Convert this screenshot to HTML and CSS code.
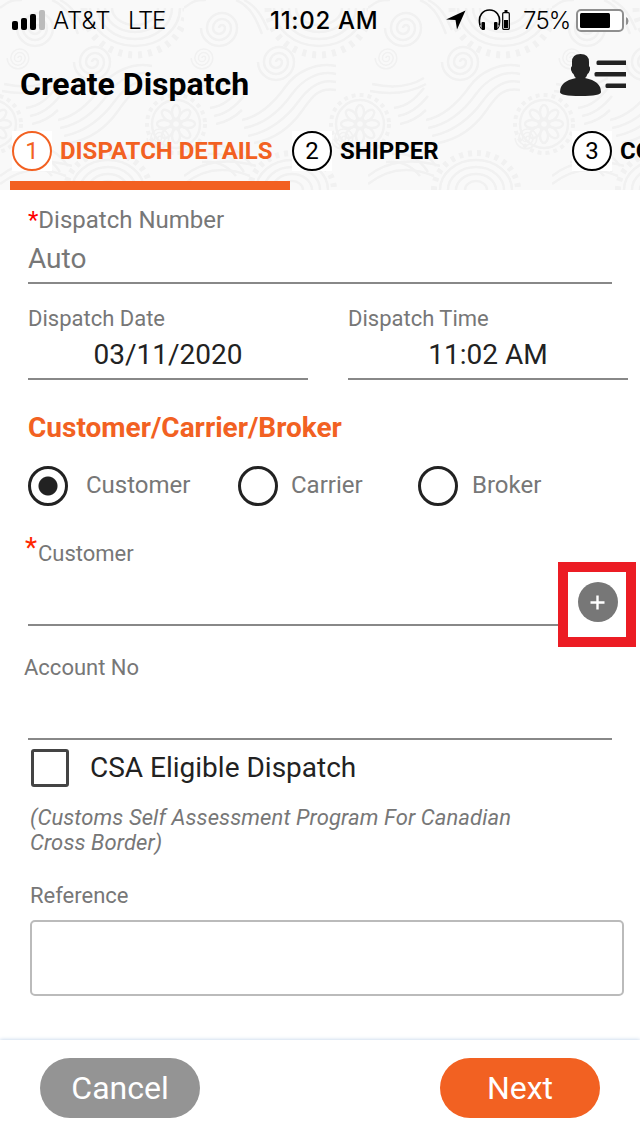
FILE: index.html
```html
<!DOCTYPE html>
<html lang="en">
	<head>
		<meta charset="UTF-8">
		<title>Create Dispatch</title>
		<link rel="stylesheet" href="styles.css">
	</head>
	<body>

		<header>
			<svg class="paisley" width="640" height="190">
				<defs>
					<path id="spiral" d="M0 0a3 3 0 0 1 6 0a6 6 0 0 1-12 0a9 9 0 0 1 18 0a12 12 0 0 1-24 0a15 15 0 0 1 30 0a18 18 0 0 1-36 0"/>
					<g id="flower">
						<circle r="4"/>
						<ellipse cx="0" cy="-12" rx="4" ry="7"/>
						<ellipse cx="0" cy="12" rx="4" ry="7"/>
						<ellipse cx="12" cy="0" rx="7" ry="4"/>
						<ellipse cx="-12" cy="0" rx="7" ry="4"/>
						<ellipse cx="0" cy="-12" rx="4" ry="7" transform="rotate(45)"/>
						<ellipse cx="0" cy="12" rx="4" ry="7" transform="rotate(45)"/>
						<ellipse cx="12" cy="0" rx="7" ry="4" transform="rotate(45)"/>
						<ellipse cx="-12" cy="0" rx="7" ry="4" transform="rotate(45)"/>
						<circle r="24"/>
						<circle r="29" stroke-width="4" stroke-dasharray="4 4"/>
					</g>
					<pattern id="paisley" width="184" height="190" patternUnits="userSpaceOnUse">
						<g fill="none" stroke="#f1f1f1" stroke-width="2.500">
							<use href="#spiral" x="92" y="62"/>
							<use href="#spiral" x="35" y="28"/>
							<use href="#spiral" transform="translate(18 58) scale(.6)"/>
							<use href="#spiral" transform="translate(158 138) scale(.6)"/>
							<use href="#flower" x="176" y="124"/>
							<use href="#flower" x="-8" y="124"/>
							<path d="M105 8a30 24 0 0 0 60 0M98 8a37 31 0 0 0 74 0M90 8a45 38 0 0 0 90 0M112 8a23 17 0 0 0 46 0"/>
							<path d="M84 8a51 47 0 0 0 102 0" stroke-width="7" stroke-dasharray="4 6"/>
							<path d="M58 120c20-4 34-20 44-34s30-24 50-20M60 128c22-4 38-20 48-34s26-24 44-20M64 136c22-4 40-20 50-34s22-24 38-20M70 143c22-4 38-18 48-32s16-24 34-21"/>
							<path d="M26 108c14-2 22-10 30-20M30 116c12-2 22-10 30-20M32 124c10-2 20-8 26-14M28 146c18-2 30 6 40 20M24 154c18-2 28 6 36 18M18 162c16-2 26 4 34 14"/>
							<path d="M72 190a36 30 0 0 1 72 0M80 190a28 23 0 0 1 56 0M88 190a20 16 0 0 1 40 0M97 190a11 9 0 0 1 22 0"/>
							<path d="M66 190a42 37 0 0 1 84 0" stroke-width="6" stroke-dasharray="4 5"/>
							<path d="M0 184c20-16 42-18 66-8M0 176c20-16 46-18 72-10M4 84c18 4 36 4 52-6M2 91c20 4 38 3 56-7M0 8c8-6 10-8 22-8M52 0c14 6 20 18 26 34M60 0c12 6 18 16 24 30"/>
						</g>
					</pattern>
				</defs>
				<rect width="640" height="190" fill="#f9f9f9"/>
				<rect width="640" height="190" fill="url(#paisley)"/>
			</svg>

			<div class="status">
				<svg class="signal" width="34" height="20">
					<rect x="0" y="11" width="6" height="9" rx="2"/>
					<rect x="9" y="8" width="6" height="12" rx="2"/>
					<rect x="18" y="4" width="6" height="16" rx="2"/>
					<rect x="27" y="0" width="6" height="20" rx="2" fill="#bbb"/>
				</svg>
				<span class="carrier">AT&amp;T</span>
				<span class="network">LTE</span>
				<span class="clock">11:02 AM</span>
				<svg class="arrow" width="20" height="20">
					<path d="M19.500.500L0 9.500l9.500 .5L11 19.500z"/>
				</svg>
				<svg class="headset" width="34" height="22">
					<path d="M2 16C-3 -4 26-4 21 16" fill="none" stroke="#000" stroke-width="1.600"/>
					<rect x="3.500" y="13" width="3.500" height="8" rx="1"/>
					<rect x="16" y="13" width="3.500" height="8" rx="1"/>
					<path d="M1.500 14q0 4 2 6M21.500 14q0 4-2 6" fill="none" stroke="#000"/>
					<rect x="24.700" y="3.700" width="6.600" height="16.600" rx="1" fill="none" stroke="#000" stroke-width="1.200"/>
					<rect x="26.500" y="1" width="3" height="2"/>
					<rect x="26" y="11" width="4" height="8"/>
				</svg>
				<span class="percent">75%</span>
				<svg class="battery" width="53" height="24">
					<rect x="1" y="2" width="46" height="21" rx="4" fill="#fff" stroke="#8f8f8f" stroke-width="2"/>
					<rect x="4" y="5" width="30" height="15" rx="1.500"/>
					<path d="M50 9q2.500 1 2.500 4T50 17z" fill="#8f8f8f"/>
				</svg>
			</div>

			<div class="title">
				<h1>Create Dispatch</h1>
				<svg class="contact" width="66" height="42" fill="#222">
					<path d="M12 8Q12 0 20.500 0T29 8V12Q30.500 13 30 16Q29 19 27.500 20Q26.500 23 25 24Q41 27 41 38Q41 42 20.500 42T0 38Q0 27 16 24Q14.500 23 13.500 20Q12 19 11 16Q10.500 13 12 12z"/>
					<rect x="36.500" y="6.500" width="32" height="4.600" rx="1.500"/>
					<rect x="34.500" y="18" width="34" height="4.600" rx="1.500"/>
					<rect x="45.500" y="29.500" width="23" height="4.600" rx="1.500"/>
				</svg>
			</div>

			<ul class="tabs">
				<li class="ac"><i><b>1</b></i>DISPATCH DETAILS</li>
				<li><i><b>2</b></i>SHIPPER</li>
				<li><i><b>3</b></i>CONSIGNEE</li>
			</ul>
		</header>

		<main>
			<div class="field number">
				<label><em>*</em>Dispatch Number</label>
				<p>Auto</p>
			</div>

			<div class="when">
				<div class="field">
					<label>Dispatch Date</label>
					<p>03/11/2020</p>
				</div>
				<div class="field">
					<label>Dispatch Time</label>
					<p>11:02 AM</p>
				</div>
			</div>

			<h2>Customer/Carrier/Broker</h2>
			<ul class="radios">
				<li class="ac"><i></i>Customer</li>
				<li><i></i>Carrier</li>
				<li><i></i>Broker</li>
			</ul>

			<div class="pick">
				<div class="field customer">
					<label><em>*</em>Customer</label>
				</div>
				<div class="add">
					<svg width="40" height="40">
						<circle cx="20" cy="20" r="20" fill="#777"/>
						<path d="M12.500 20.500h14M19.500 13.500v14" stroke="#fff" stroke-width="2.400"/>
					</svg>
				</div>
			</div>

			<div class="field account">
				<label>Account No</label>
			</div>

			<div class="csa"><i></i><span>CSA Eligible Dispatch</span></div>
			<p class="note">(Customs Self Assessment Program For Canadian Cross Border)</p>

			<label class="ref">Reference</label>
			<div class="box"></div>
		</main>

		<footer>
			<div class="btn cancel">Cancel</div>
			<div class="btn next">Next</div>
		</footer>
	</body>
</html>
```

FILE: styles.css
```css
* {
	margin: 0;
	padding: 0;
	list-style: none;
	box-sizing: border-box;
}

body {
	width: 640px;
	height: 1136px;
	overflow: hidden;
	display: flex;
	flex-direction: column;
	background: #fff;
	color: #222;
	font-family: Roboto, sans-serif;
	white-space: nowrap;
}

svg {
	display: block;
	flex: none;
}

i, em {
	font-style: normal;
}

header {
	height: 190px;
	position: relative;
	overflow: hidden;
	color: #000;
}

.paisley {
	position: absolute;
	left: 0;
	top: 0;
	z-index: -1;
}

/* status bar */
.status {
	display: flex;
	height: 40px;
	padding: 0 10px 0 12px;
	align-items: center;
	font-family: Inter, sans-serif;
	font-size: 24px;
	font-weight: 300;
	line-height: 40px;
}

.status span {
	padding-top: 2px;
}

.status .carrier {
	width: 76px;
	padding-left: 7px;
}

.status .network {
	width: 148px;
	padding-left: 6px;
	letter-spacing: -1.2px;
}

.status .clock {
	width: 176px;
	font-weight: 500;
	letter-spacing: 0.7px;
}

.status .headset {
	margin-left: 12px;
}

.status .percent {
	width: 53px;
	margin-left: 11px;
	letter-spacing: -0.8px;
}

.title {
	display: flex;
	height: 70px;
	padding: 14px 14px 0 20px;
	justify-content: space-between;
}

h1 {
	font-size: 32px;
	line-height: 60px;
}

.tabs {
	display: flex;
	width: 850px;
	height: 80px;
	padding-left: 10px;
}

.tabs li {
	width: 280px;
	height: 80px;
	flex: none;
	display: flex;
	align-items: center;
	padding: 11px 0 0 2px;
	border-bottom: 9px solid transparent;
	font-size: 24px;
	font-weight: bold;
}

.tabs i {
	width: 40px;
	height: 40px;
	margin-right: 8px;
	background: #fff;
}

.tabs b {
	display: block;
	height: 40px;
	border: 2px solid #000;
	border-radius: 50%;
	font-weight: normal;
	line-height: 36px;
	text-align: center;
}

.tabs .ac {
	color: #f26122;
	border-color: #f26122;
}

.tabs .ac b {
	border-color: #f26122;
}

/* form */
main {
	height: 850px;
}

.field {
	border-bottom: 2px solid #888;
	color: #777;
	font-size: 22px;
}

.field label {
	display: block;
	line-height: 32px;
}

.field p {
	font-size: 28px;
	line-height: 46px;
}

em {
	color: #f00;
}

.number {
	height: 94px;
	margin: 0 28px;
	padding-top: 14px;
}

.number label {
	font-size: 24px;
}

.when {
	display: flex;
	gap: 40px;
	padding: 0 12px 0 28px;
}

.when .field {
	width: 280px;
	height: 96px;
	padding-top: 19px;
}

.when p {
	color: #222;
	line-height: 40px;
	text-align: center;
}

h2 {
	height: 86px;
	padding: 28px 28px 0;
	color: #f26122;
	font-size: 28px;
	line-height: 40px;
}

.radios {
	display: flex;
	padding-left: 28px;
	color: #777;
	font-size: 24px;
	line-height: 38px;
}

.radios li {
	display: flex;
	width: 180px;
	height: 40px;
}

.radios li.ac {
	width: 210px;
}

.radios i {
	width: 40px;
	height: 40px;
	margin-right: 13px;
	border: 3px solid #222;
	border-radius: 50%;
}

.radios .ac i {
	margin-right: 18px;
	background: radial-gradient(#222 9px, transparent 10px);
}

.radios li:last-child i {
	margin-right: 14px;
}

.pick {
	display: flex;
	height: 141px;
	padding-left: 28px;
}

.customer {
	width: 530px;
	height: 120px;
	padding-top: 32px;
}

.customer label {
	display: flex;
}

.customer em {
	width: 13px;
	margin-left: -3px;
	color: #ff2600;
	font-size: 28px;
	line-height: 20px;
}

.add {
	width: 78px;
	height: 85px;
	margin-top: 56px;
	padding: 10px;
	border: 10px solid #ec1c24;
}

.account {
	height: 93px;
	margin: 0 28px;
	padding-top: 5px;
}

.account label {
	margin-left: -4px;
}

.csa {
	display: flex;
	height: 56px;
	padding: 9px 31px 0;
	font-size: 28px;
	line-height: 38px;
}

.csa i {
	width: 38px;
	height: 38px;
	margin-right: 21px;
	border: 3px solid #444;
	border-radius: 3px;
}

.note {
	width: 540px;
	height: 66px;
	padding: 9px 0 0 30px;
	color: #777;
	font-size: 22px;
	font-style: italic;
	letter-spacing: 0.1px;
	line-height: 25px;
	white-space: normal;
}

.ref {
	display: block;
	height: 58px;
	padding: 18px 30px 0;
	color: #777;
	font-size: 22px;
	line-height: 32px;
}

.box {
	width: 594px;
	height: 76px;
	margin-left: 30px;
	border: 2px solid #bbb;
	border-radius: 5px;
}

footer {
	display: flex;
	height: 96px;
	padding: 18px 40px 0;
	justify-content: space-between;
	background: #fff;
	box-shadow: 0 0 4px #b9cde6;
}

.btn {
	width: 160px;
	height: 60px;
	border-radius: 30px;
	color: #fff;
	font-size: 32px;
	line-height: 60px;
	text-align: center;
}

.cancel {
	background: #949494;
}

.next {
	background: #f26122;
}
```
